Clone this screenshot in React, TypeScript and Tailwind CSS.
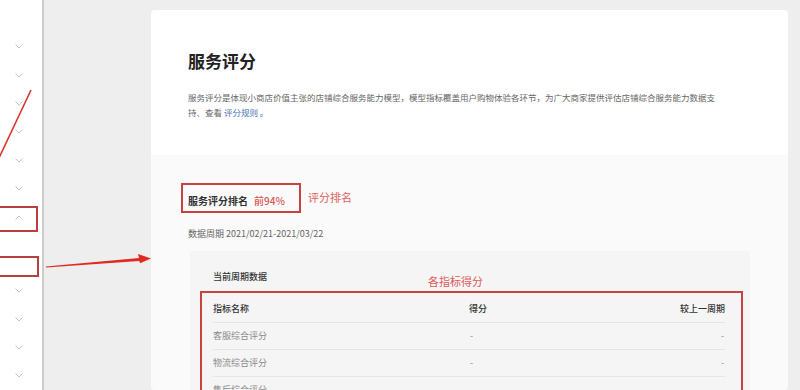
import React from "react";

function Chevron({ up = false }: { up?: boolean }) {
  return (
    <svg width="8" height="5" viewBox="0 0 8 5" className="block">
      <path
        d={up ? "M0.5 4.5 L4 1 L7.5 4.5" : "M0.5 0.5 L4 4 L7.5 0.5"}
        fill="none"
        stroke="#c4c4c4"
        strokeWidth="1"
      />
    </svg>
  );
}

function SideRow({ up = false }: { up?: boolean }) {
  return (
    <div className="flex h-[28.6px] items-center pl-[15px]">
      <Chevron up={up} />
    </div>
  );
}

const rows = [
  { name: "客服综合评分", score: "-", diff: "-" },
  { name: "物流综合评分", score: "-", diff: "-" },
  { name: "售后综合评分", score: "-", diff: "-" },
];

export default function App() {
  return (
    <div className="relative flex h-[390px] w-[800px] overflow-hidden bg-[#eeeeee] font-['Noto_Sans_CJK_SC','Noto_Sans',sans-serif]">
      {/* Sidebar */}
      <div className="flex w-[44px] shrink-0 flex-col border-r-2 border-[#cdcdcd] bg-white pt-[32.7px]">
        <SideRow />
        <SideRow />
        <SideRow />
        <SideRow />
        <SideRow />
        <SideRow />
        <SideRow up />
        <div className="h-[23px]" />
        <div className="h-[22.7px]" />
        <SideRow />
        <SideRow />
        <SideRow />
        <SideRow />
      </div>

      {/* Main */}
      <div className="flex flex-1 pl-[107px] pr-[12px] pt-[10px]">
        <div className="flex w-[637px] flex-col overflow-hidden rounded-[4px] bg-white">
          {/* Header section */}
          <div className="h-[145px] shrink-0 pl-[37px] pt-[39px]">
            <h1 className="text-[17px] font-bold leading-[24px] text-[#222]">服务评分</h1>
            <p className="mt-[17px] w-[570px] whitespace-nowrap text-[8.5px] leading-[15px] text-[#666]">
              服务评分是体现小商店价值主张的店铺综合服务能力模型，模型指标覆盖用户购物体验各环节，为广大商家提供评估店铺综合服务能力数据支
              <br />
              持、查看 <span className="text-[#4a73b5]">评分规则</span> 。
            </p>
          </div>

          {/* Gray section */}
          <div className="flex-1 bg-[#fafafa] pl-[37px] pt-[28px]">
            <div className="relative -ml-[7px] flex h-[30px] w-[120px] items-center pl-[7px] pt-[6px]">
              <span className="text-[10px] font-bold leading-[14px] text-[#333]">服务评分排名</span>
              <span className="ml-[6px] text-[10px] font-medium leading-[14px] text-[#e05252]">前94%</span>
              <div className="pointer-events-none absolute inset-0 border-2 border-[#c9423f]" />
              <span className="absolute left-[127px] top-[7px] whitespace-nowrap text-[11px] leading-[14px] text-[#e06060]">
                评分排名
              </span>
            </div>

            <div className="mt-[14px] text-[9px] leading-[14px] text-[#666]">数据周期 2021/02/21-2021/03/22</div>

            <div className="ml-[2px] mt-[10px] w-[560px] bg-[#f5f5f5] pl-[23px] pr-[25px] pt-[19px]">
              <div className="text-[9px] font-medium leading-[14px] text-[#333]">当前周期数据</div>
              <div className="relative mt-[12px] w-[512px]">
                <span className="absolute left-[215px] top-[-22px] whitespace-nowrap text-[11px] leading-[14px] text-[#e05858]">
                  各指标得分
                </span>
                <div className="pointer-events-none absolute left-[-13px] right-[-18px] top-[-5px] h-[200px] border-2 border-[#c9423f]" />
                <div className="grid h-[27px] grid-cols-[256px_1fr_auto] items-center border-b border-[#e6e6e6] text-[9px] font-medium text-[#333]">
                  <span>指标名称</span>
                  <span>得分</span>
                  <span className="text-right">较上一周期</span>
                </div>
                {rows.map((r) => (
                  <div
                    key={r.name}
                    className="grid h-[27px] grid-cols-[256px_1fr_auto] items-center border-b border-[#e6e6e6] text-[9px] text-[#8a8a8a]"
                  >
                    <span>{r.name}</span>
                    <span className="pl-[1px]">{r.score}</span>
                    <span className="pr-[1px] text-right">{r.diff}</span>
                  </div>
                ))}
              </div>
            </div>
          </div>
        </div>
      </div>

      {/* Sidebar annotation boxes */}
      <div className="pointer-events-none absolute left-[-2px] top-[206px] h-[26px] w-[40px] border-2 border-[#b8403c]" />
      <div className="pointer-events-none absolute left-[-2px] top-[256px] h-[21px] w-[41px] border-2 border-[#b8403c]" />

      {/* Annotation strokes */}
      <svg className="pointer-events-none absolute left-0 top-0" width="800" height="390" viewBox="0 0 800 390">
        <line x1="31" y1="90" x2="-1" y2="158" stroke="#d8362c" strokeWidth="1.6" />
        <polygon
          points="46,266.6 139,258 138,254 151,258.4 140,263.2 139.4,261 46,267.6"
          fill="#e0291f"
        />
      </svg>
    </div>
  );
}
